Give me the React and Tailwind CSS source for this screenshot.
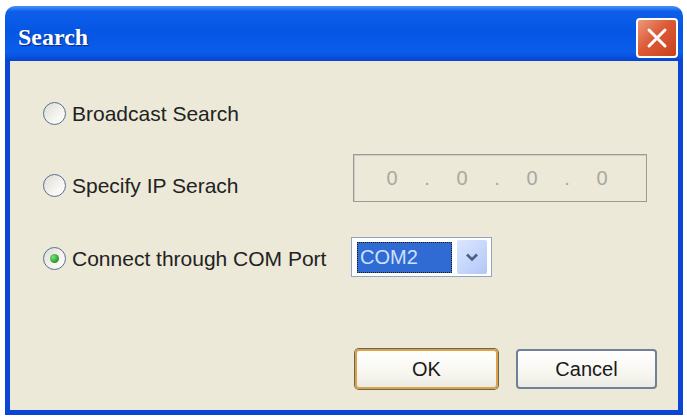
import React from "react";

const sans = { fontFamily: '"Liberation Sans", Arial, sans-serif' };

function Radio({ checked }) {
  return (
    <div className="w-[23px] h-[23px] rounded-full border-[1.5px] border-[#56708f] bg-[linear-gradient(135deg,#dcdad2_0%,#f4f3ee_55%,#ffffff_100%)] flex items-center justify-center shrink-0">
      {checked && (
        <div className="w-[9px] h-[9px] rounded-full bg-[radial-gradient(circle_at_35%_35%,#7fe07f_0%,#2ea52e_60%,#1d7f1d_100%)]" />
      )}
    </div>
  );
}

function RadioLabel({ checked, children }) {
  return (
    <div className="flex items-center gap-[6px] h-[30px]">
      <Radio checked={checked} />
      <span className="text-[21px] leading-none text-[#222222]" style={sans}>
        {children}
      </span>
    </div>
  );
}

function Digit() {
  return <div className="w-[56px] text-center">0</div>;
}
function Dot() {
  return <div className="w-[14px] text-center">.</div>;
}

export default function App() {
  return (
    <div className="w-[687px] h-[417px] bg-white overflow-hidden">
      <div className="ml-[5px] mt-[6px] w-[678px] h-[409px] flex flex-col">
        {/* Title bar */}
        <div className="h-[55px] shrink-0 rounded-t-[10px] bg-[linear-gradient(180deg,#4a92f8_0%,#0d5fea_10%,#0656e4_45%,#0a5cea_85%,#0744cf_100%)] flex items-center pl-[13px] pr-[5px]">
          <span
            className="text-white text-[24px] font-bold pt-[6px] [text-shadow:1px_1px_1px_#0a2a8a]"
            style={{ fontFamily: '"Liberation Serif", "Times New Roman", serif' }}
          >
            Search
          </span>
          <div className="ml-auto mt-[8px] w-[42px] h-[40px] rounded-[4px] border-[2px] border-white bg-[linear-gradient(135deg,#ec9a7c_0%,#dd5a36_45%,#c8401c_100%)] flex items-center justify-center">
            <svg width="26" height="26" viewBox="0 0 26 26">
              <path d="M5 5 L21 21 M21 5 L5 21" stroke="white" strokeWidth="3" strokeLinecap="round" />
            </svg>
          </div>
        </div>
        {/* Body */}
        <div className="flex-1 bg-[#ece9d8] border-x-[5px] border-b-[5px] border-[#0b45d6] pl-[33px] pt-[37px] flex flex-col">
          <RadioLabel>Broadcast Search</RadioLabel>

          <div className="mt-[26px] h-[48px] flex items-start">
            <div className="w-[310px] mt-[16px]">
              <RadioLabel>Specify IP Serach</RadioLabel>
            </div>
            <div
              className="w-[294px] h-[48px] border-[1.5px] border-[#9a9a96] bg-[#ece9d8] shadow-[inset_1px_1px_0_#d0cec4] flex items-center pl-[10px] text-[20px] text-[#a9a89f]"
              style={sans}
            >
              <Digit />
              <Dot />
              <Digit />
              <Dot />
              <Digit />
              <Dot />
              <Digit />
            </div>
          </div>

          <div className="mt-[35px] h-[40px] flex items-center">
            <div className="w-[308px] mt-[2px]">
              <RadioLabel checked>Connect through COM Port</RadioLabel>
            </div>
            <div className="w-[141px] h-[40px] border-[1.5px] border-[#8fa6c2] bg-white flex items-center pl-[5px] pr-[3px] gap-[5px]">
              <div
                className="w-[95px] h-[31px] bg-[#2f6bd2] border border-dotted border-[#1a1a1a] flex items-center pl-[2px] text-[20px] text-[#cfe0ff] leading-none"
                style={sans}
              >
                COM2
              </div>
              <div className="w-[30px] h-[34px] rounded-[2px] bg-[linear-gradient(135deg,#dbe6ff_0%,#c3d4fb_60%,#b1c6f6_100%)] flex items-center justify-center">
                <svg width="14" height="10" viewBox="0 0 14 10">
                  <path d="M2 2.5 L7 7.5 L12 2.5" stroke="#4a5f86" strokeWidth="2.6" fill="none" />
                </svg>
              </div>
            </div>
          </div>

          <div className="mt-[72px] flex justify-end pr-[21px] gap-[18px]">
            <button
              className="w-[143px] h-[40px] rounded-[4px] border-[2px] border-[#dca24a] shadow-[0_0_0_1px_#6a6555] bg-[linear-gradient(180deg,#ffffff_0%,#f7f6f0_60%,#ecebe2_100%)] text-[20px] text-[#1a1a1a]"
              style={sans}
            >
              OK
            </button>
            <button
              className="w-[141px] h-[40px] rounded-[4px] border-[2px] border-[#6f8198] bg-[linear-gradient(180deg,#ffffff_0%,#f7f6f0_60%,#ecebe2_100%)] text-[20px] text-[#1a1a1a]"
              style={sans}
            >
              Cancel
            </button>
          </div>
        </div>
      </div>
    </div>
  );
}
